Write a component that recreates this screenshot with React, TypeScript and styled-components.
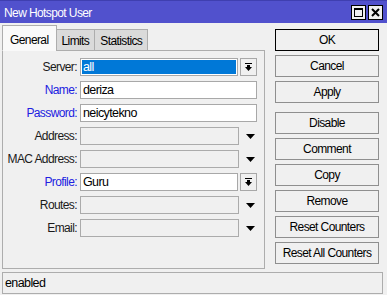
import styled, { createGlobalStyle } from 'styled-components';

const Global = createGlobalStyle`
  html, body { margin: 0; padding: 0; background: #f0f0f0; }
  body {
    font-family: "Liberation Sans", Arial, sans-serif;
    font-size: 12px;
    letter-spacing: -0.6px;
    color: #000;
  }
`;

const Window = styled.div`
  width: 387px;
  height: 295px;
  display: flex;
  flex-direction: column;
  background: #f0f0f0;
  overflow: hidden;
`;

const TitleBar = styled.div`
  height: 23px;
  flex: none;
  display: flex;
  align-items: center;
  padding: 0 4px 0 4px;
  background: #5151cd;
  border-top: 1px solid #3f3fb0;
  box-sizing: border-box;
  color: #fff;
  font-size: 12px;
`;

const Title = styled.div`
  flex: 1;
  padding-top: 1px;
`;

const TitleButtons = styled.div`
  display: flex;
  gap: 2px;
`;

const TitleButton = styled.div`
  width: 15px;
  height: 15px;
  box-sizing: border-box;
  background: #f0f0f0;
  border: 1px solid #000;
  display: flex;
  align-items: center;
  justify-content: center;
`;

const Body = styled.div`
  flex: 1;
  display: flex;
  padding: 0 0 0 2px;
`;

const LeftCol = styled.div`
  width: 263px;
  padding-top: 2px;
  display: flex;
  flex-direction: column;
`;

const TabStrip = styled.div`
  display: flex;
  align-items: flex-end;
  height: 26px;
  position: relative;
  z-index: 1;
  margin-bottom: -1px;
`;

const Tab = styled.div<{ $active?: boolean }>`
  box-sizing: border-box;
  height: ${({ $active }) => ($active ? 26 : 22)}px;
  padding: ${({ $active }) => ($active ? '3px 7px 0 7px' : '2px 5px 0 5px')};
  background: ${({ $active }) => ($active ? '#f9f9f9' : '#dadada')};
  border: 1px solid #adadad;
  border-bottom: ${({ $active }) => ($active ? '1px solid #f9f9f9' : '1px solid #adadad')};
  margin-left: ${({ $active }) => ($active ? 0 : -1)}px;
  display: flex;
  align-items: center;
  font-size: 12px;
  color: #000;
`;

const Panel = styled.div`
  box-sizing: border-box;
  height: 219px;
  border: 1px solid #adadad;
  background: #f0f0f0;
  padding: 7px 0 0 0;
  display: flex;
  flex-direction: column;
  gap: 5px;
`;

const Row = styled.div`
  display: flex;
  align-items: center;
  height: 18px;
`;

const Label = styled.div<{ $blue?: boolean }>`
  width: 74px;
  text-align: right;
  padding-right: 3px;
  white-space: nowrap;
  color: ${({ $blue }) => ($blue ? '#2121e0' : '#1a1a1a')};
  font-size: 12px;
`;

const Field = styled.div<{ $w: number; $disabled?: boolean }>`
  box-sizing: border-box;
  width: ${({ $w }) => $w}px;
  height: 18px;
  border: 1px solid ${({ $disabled }) => ($disabled ? '#ababab' : '#a8a8a8')};
  background: ${({ $disabled }) => ($disabled ? '#f0f0f0' : '#fff')};
  padding: 1px;
  display: flex;
  font-size: 12.5px;
`;

const FieldText = styled.div<{ $selected?: boolean }>`
  flex: 1;
  display: flex;
  align-items: center;
  padding-left: 1px;
  background: ${({ $selected }) => ($selected ? '#0078d7' : 'transparent')};
  color: ${({ $selected }) => ($selected ? '#fff' : '#000')};
`;

const DropButton = styled.div`
  box-sizing: border-box;
  width: 17px;
  height: 18px;
  margin-left: 2px;
  border: 1px solid #a8a8a8;
  background: #f0f0f0;
  display: flex;
  align-items: center;
  justify-content: center;
`;

const DropArrow = styled.div`
  width: 17px;
  margin-left: 3px;
  display: flex;
  align-items: center;
  justify-content: center;
`;

const RightCol = styled.div`
  width: 104px;
  margin-left: 10px;
  padding-top: 6px;
  display: flex;
  flex-direction: column;
`;

const Group = styled.div`
  display: flex;
  flex-direction: column;
  gap: 4px;
  & + & {
    margin-top: 9px;
  }
`;

const Button = styled.div<{ $default?: boolean }>`
  box-sizing: border-box;
  height: 22px;
  border: 1px solid ${({ $default }) => ($default ? '#000' : '#8f8f8f')};
  background: #f0f0f0;
  display: flex;
  align-items: center;
  justify-content: center;
  white-space: nowrap;
  font-size: 12px;
  color: #000;
`;

const StatusBar = styled.div`
  box-sizing: border-box;
  flex: none;
  height: 22px;
  margin: 0 4px 1px 2px;
  border: 1px solid #adadad;
  display: flex;
  align-items: center;
  padding-left: 2px;
  font-size: 12.5px;
`;

const ComboIcon = () => (
  <svg width="9" height="9" viewBox="0 0 9 9">
    <rect x="1" y="0" width="7" height="1" fill="#000" />
    <rect x="3" y="2" width="3" height="2" fill="#000" />
    <polygon points="1,4 8,4 4.5,8" fill="#000" />
  </svg>
);

const Triangle = () => (
  <svg width="9" height="5" viewBox="0 0 9 5">
    <polygon points="0,0 9,0 4.5,5" fill="#000" />
  </svg>
);

type FieldDef = {
  label: string;
  blue?: boolean;
  value?: string;
  kind: 'combo' | 'text' | 'disabled';
  selected?: boolean;
};

const FIELDS: FieldDef[] = [
  { label: 'Server:', value: 'all', kind: 'combo', selected: true },
  { label: 'Name:', blue: true, value: 'deriza', kind: 'text' },
  { label: 'Password:', blue: true, value: 'neicytekno', kind: 'text' },
  { label: 'Address:', kind: 'disabled' },
  { label: 'MAC Address:', kind: 'disabled' },
  { label: 'Profile:', blue: true, value: 'Guru', kind: 'combo' },
  { label: 'Routes:', kind: 'disabled' },
  { label: 'Email:', kind: 'disabled' },
];

export default function App() {
  return (
    <Window>
      <Global />
      <TitleBar>
        <Title>New Hotspot User</Title>
        <TitleButtons>
          <TitleButton>
            <svg width="11" height="11" viewBox="0 0 11 11">
              <rect x="1.5" y="1.5" width="8" height="8" fill="none" stroke="#000" strokeWidth="1" />
              <rect x="1" y="1" width="9" height="2" fill="#000" />
            </svg>
          </TitleButton>
          <TitleButton>
            <svg width="11" height="11" viewBox="0 0 11 11">
              <path d="M2 2 L9 9 M9 2 L2 9" stroke="#000" strokeWidth="2" />
            </svg>
          </TitleButton>
        </TitleButtons>
      </TitleBar>
      <Body>
        <LeftCol>
          <TabStrip>
            <Tab $active>General</Tab>
            <Tab>Limits</Tab>
            <Tab>Statistics</Tab>
          </TabStrip>
          <Panel>
            {FIELDS.map(f => (
              <Row key={f.label}>
                <Label $blue={f.blue}>{f.label}</Label>
                {f.kind === 'text' && (
                  <Field $w={177}>
                    <FieldText>{f.value}</FieldText>
                  </Field>
                )}
                {f.kind === 'combo' && (
                  <>
                    <Field $w={158}>
                      <FieldText $selected={f.selected}>{f.value}</FieldText>
                    </Field>
                    <DropButton>
                      <ComboIcon />
                    </DropButton>
                  </>
                )}
                {f.kind === 'disabled' && (
                  <>
                    <Field $w={159} $disabled>
                      <FieldText />
                    </Field>
                    <DropArrow>
                      <Triangle />
                    </DropArrow>
                  </>
                )}
              </Row>
            ))}
          </Panel>
        </LeftCol>
        <RightCol>
          <Group>
            <Button $default>OK</Button>
            <Button>Cancel</Button>
            <Button>Apply</Button>
          </Group>
          <Group>
            <Button>Disable</Button>
            <Button>Comment</Button>
            <Button>Copy</Button>
            <Button>Remove</Button>
            <Button>Reset Counters</Button>
            <Button>Reset All Counters</Button>
          </Group>
        </RightCol>
      </Body>
      <StatusBar>enabled</StatusBar>
    </Window>
  );
}
